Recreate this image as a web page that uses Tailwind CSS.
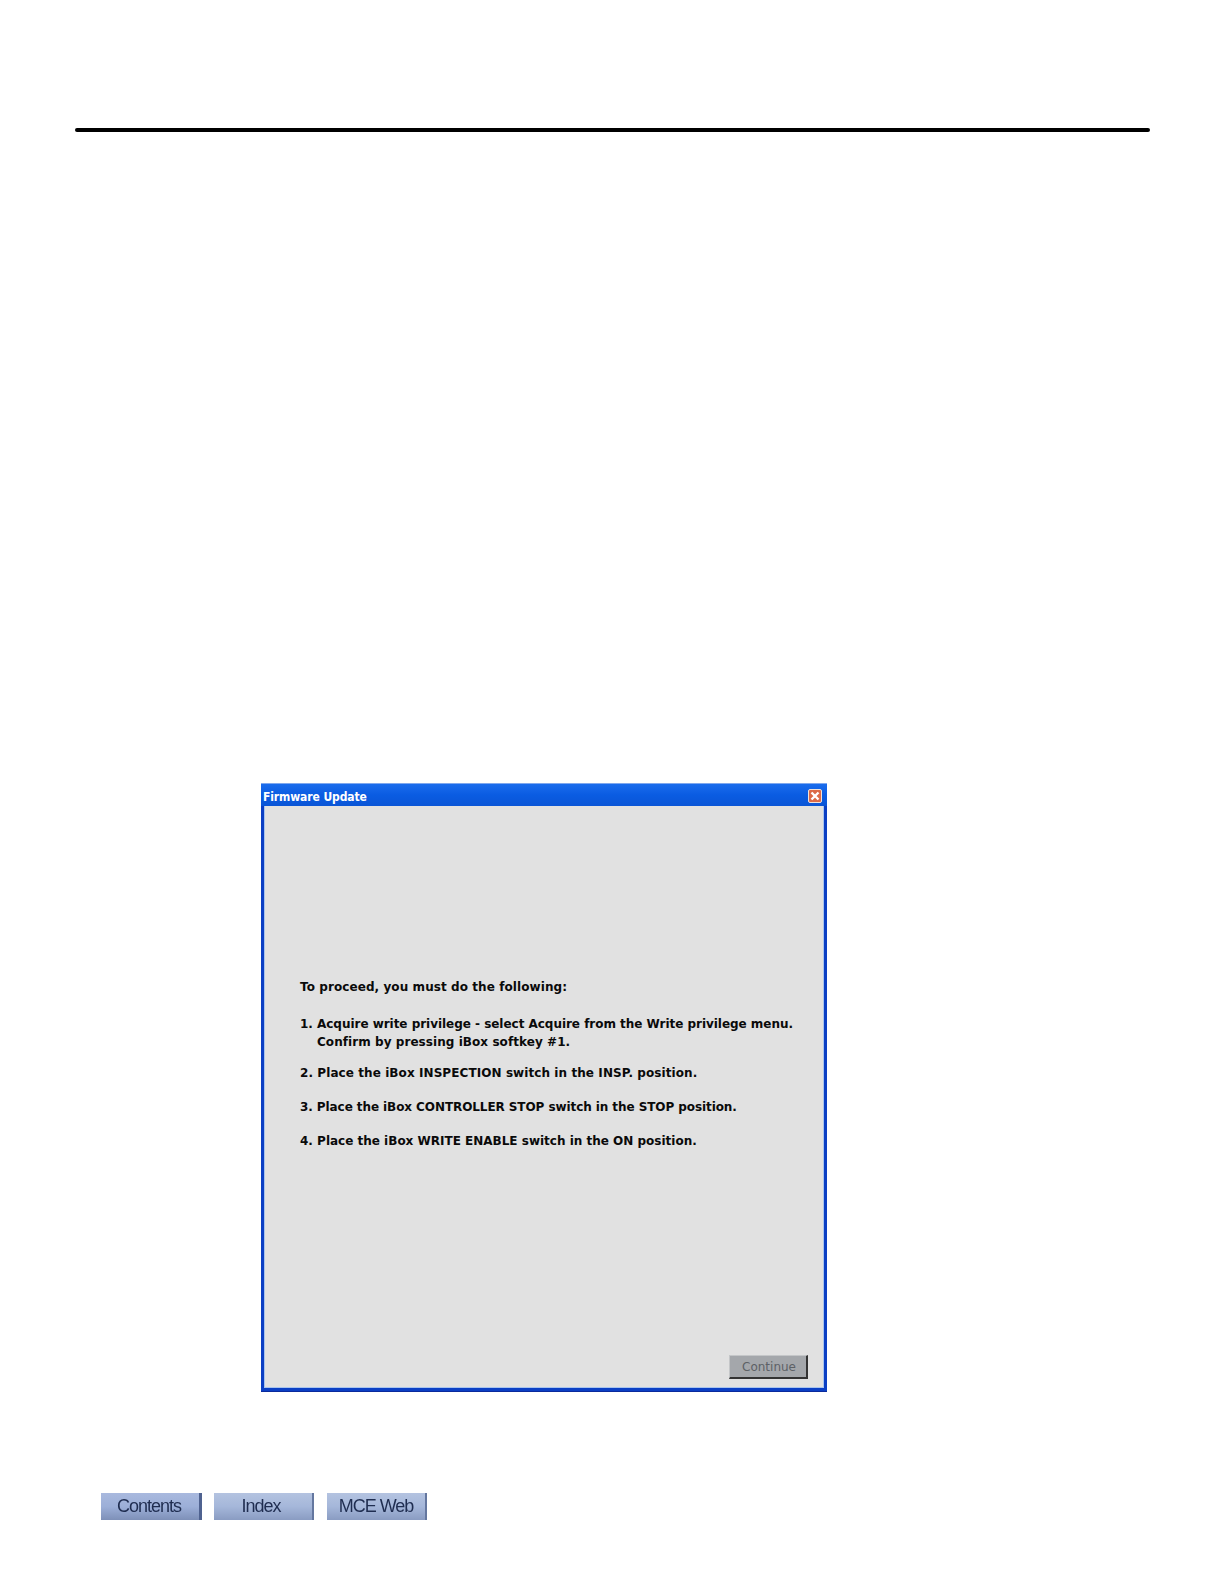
<!DOCTYPE html>
<html lang="en">
<head>
    <meta charset="UTF-8">
    <title>Firmware Update</title>
    <script src="https://cdn.jsdelivr.net/npm/@tailwindcss/browser@4"></script>
</head>
<body class="bg-white w-[1224px] h-[1584px] overflow-hidden font-['Liberation_Sans',sans-serif]">
    <!-- page rule -->
    <div class="ml-[75px] mt-[128px] w-[1075px] h-[4px] bg-black rounded-full"></div>

    <!-- dialog -->
    <div class="ml-[261px] mt-[651px] w-[566px] h-[609px] flex flex-col bg-[#0b3fc4] border-t border-[#7fa8ee] px-[3px] pb-[3px] border-b border-b-[#0a2a9c]">
        <div class="h-[22px] shrink-0 -mx-[3px] px-[3px] flex items-center justify-between bg-gradient-to-b from-[#1a6cec] via-[#0a5ce2] to-[#0a55d6]">
            <span class="mt-[3px] -ml-[1px] text-white text-[12px] font-bold font-['DejaVu_Sans_Condensed','DejaVu_Sans',sans-serif] tracking-[-0.1px] whitespace-nowrap">Firmware Update</span>
            <span class="mr-[2px] mt-[2px] w-[14px] h-[14px] flex items-center justify-center rounded-[2px] border border-[#f0e2da] bg-[#dc6a48]">
                <svg class="w-[10px] h-[10px]" viewBox="0 0 10 10" fill="none" stroke="#fff" stroke-width="2.4">
                    <path d="M1.5 1.5l7 7M8.5 1.5l-7 7" />
                </svg>
            </span>
        </div>
        <div class="flex-1 flex flex-col bg-[#e1e1e1] border-x border-b border-[#a8c4ee] pl-[35px] pr-[15px] font-['DejaVu_Sans',sans-serif] font-bold text-[12px] text-[#0a0a0a] whitespace-nowrap">
            <p class="mt-[172px] leading-[18px] tracking-[0.08px]">To proceed, you must do the following:</p>
            <p class="mt-[19px] leading-[18px] tracking-[-0.03px]">1. Acquire write privilege - select Acquire from the Write privilege menu.<br><span class="ml-[17px] tracking-[0.06px]">Confirm by pressing iBox softkey #1.</span></p>
            <p class="mt-[13px] leading-[18px] tracking-[0.08px]">2. Place the iBox INSPECTION switch in the INSP. position.</p>
            <p class="mt-[16px] leading-[18px] tracking-[-0.08px]">3. Place the iBox CONTROLLER STOP switch in the STOP position.</p>
            <p class="mt-[16px] leading-[18px]">4. Place the iBox WRITE ENABLE switch in the ON position.</p>
            <div class="mt-auto mb-[8px] self-end w-[79px] h-[24px] pl-[2px] flex items-center justify-center bg-[#a4a7ab] border-t border-l border-[#c4c6c8] border-r-2 border-b-2 border-r-[#333] border-b-[#333] text-[#5d6166] font-normal text-[12px]">Continue</div>
        </div>
    </div>

    <!-- footer nav -->
    <div class="ml-[101px] mt-[101px] flex">
        <div class="w-[101px] h-[27px] pr-[2px] flex items-center justify-center bg-gradient-to-b from-[#a9b9de] via-[#9cafd8] to-[#7e90b8] border-r-[3px] border-[#4f6290] text-[#1f2d50] text-[18px] tracking-[-1px]"><span class="blur-[0.4px]">Contents</span></div>
        <div class="ml-[12px] w-[100px] h-[27px] pr-[4px] flex items-center justify-center bg-gradient-to-b from-[#b4c3e0] via-[#a5b7da] to-[#8a9cc2] border-r-[2px] border-[#64779f] text-[#1f2d50] text-[18px] tracking-[-1px]"><span class="blur-[0.4px]">Index</span></div>
        <div class="ml-[13px] w-[100px] h-[27px] flex items-center justify-center bg-gradient-to-b from-[#b4c3e0] via-[#a5b7da] to-[#8a9cc2] border-r-[2px] border-[#64779f] text-[#1f2d50] text-[18px] tracking-[-1px]"><span class="blur-[0.4px]">MCE Web</span></div>
    </div>
</body>
</html>
